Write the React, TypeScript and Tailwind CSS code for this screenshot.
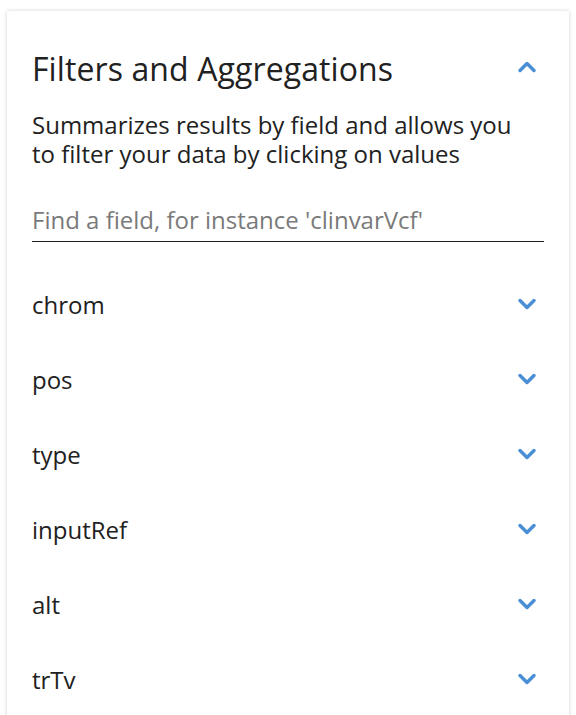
import { ChevronDown, ChevronUp } from 'lucide-react'

const fields = ['chrom', 'pos', 'type', 'inputRef', 'alt', 'trTv']

export default function App() {
  return (
    <div className="h-[715px] overflow-hidden bg-white pt-[11px] px-[7px]" style={{ fontFamily: '"Open Sans", "Noto Sans", sans-serif' }}>
      <div className="bg-white shadow-[0_0_4px_rgba(0,0,0,0.18)] pl-[25px] pr-[25px] pt-[35px] pb-10 min-h-[720px] text-[#212121]">
        <div className="flex items-center justify-between h-[46px]">
          <h2 className="text-[32px] leading-[46px] tracking-[0.1px]">Filters and Aggregations</h2>
          <ChevronUp className="h-7 w-7 text-[#4a8fd6] mr-[3px] -translate-y-[2px]" strokeWidth={3} />
        </div>
        <p className="mt-[18px] pr-[12px] text-[24px] leading-[29px]">
          Summarizes results by field and allows you to filter your data by clicking on values
        </p>
        <input
          className="mt-[32px] block w-full h-[42px] pb-[3px] border-b border-[#222] text-[24px] outline-none placeholder:text-[#7a7a7a] bg-transparent"
          placeholder="Find a field, for instance 'clinvarVcf'"
          style={{ fontFamily: 'inherit' }}
        />
        <div className="mt-[25px]">
          {fields.map((f) => (
            <div key={f} className="flex items-center justify-between h-[75px]">
              <span className="text-[24px]">{f}</span>
              <ChevronDown className="h-7 w-7 text-[#4a8fd6] mr-[3px] -translate-y-[1px]" strokeWidth={3} />
            </div>
          ))}
        </div>
      </div>
    </div>
  )
}
